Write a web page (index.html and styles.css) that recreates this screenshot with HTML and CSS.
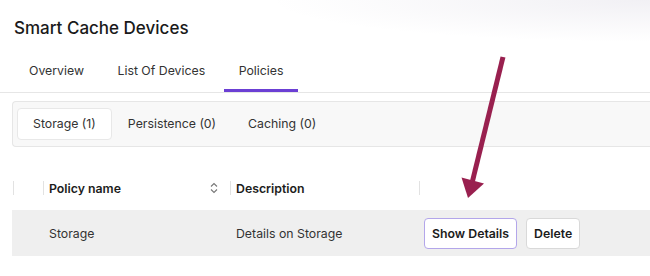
FILE: index.html
```html
<!DOCTYPE html>
<html lang="en">
<head>
    <meta charset="UTF-8">
    <meta name="viewport" content="width=device-width, initial-scale=1.0">
    <title>Smart Cache Devices</title>
    <link rel="stylesheet" href="styles.css">
</head>
<body>

<div class="page">
    <!-- Faint shadow from the panel above -->
    <div class="top-shade"></div>

    <h1 class="title">Smart Cache Devices</h1>

    <!-- Main tabs -->
    <div class="tabs">
        <div class="tab">Overview</div>
        <div class="tab">List Of Devices</div>
        <div class="tab active">Policies</div>
    </div>

    <!-- Policy type switcher -->
    <div class="segments">
        <div class="segment selected">Storage (1)</div>
        <div class="segment">Persistence (0)</div>
        <div class="segment">Caching (0)</div>
    </div>

    <!-- Policies table -->
    <div class="table">
        <div class="th sep"></div>
        <div class="th sep">
            <span>Policy name</span>
            <svg class="sort" width="8" height="12" viewBox="0 0 8 12">
                <path d="M1 4.5 L4 1.5 L7 4.5 M1 7.5 L4 10.5 L7 7.5" fill="none" stroke="#777" stroke-width="1.1"/>
            </svg>
        </div>
        <div class="th sep">Description</div>
        <div class="th sep"></div>

        <div class="td"></div>
        <div class="td">Storage</div>
        <div class="td">Details on Storage</div>
        <div class="td actions">
            <button class="btn focus">Show Details</button>
            <button class="btn">Delete</button>
        </div>
    </div>

    <!-- Annotation arrow -->
    <svg class="arrow" width="650" height="276" viewBox="0 0 650 276">
        <line x1="503" y1="57" x2="472.5" y2="181" stroke="#99204f" stroke-width="5"/>
        <polygon points="461.5,177.5 484,183.5 468,198" fill="#99204f"/>
    </svg>
</div>

</body>
</html>
```

FILE: styles.css
```css
* {
    box-sizing: border-box;
}

body {
    margin: 0;
    font-family: Inter, "Noto Sans", sans-serif;
    color: #222;
    background: #fff;
    overflow: hidden;
}

.page {
    position: relative;
    width: 650px;
    height: 276px;
}

.top-shade {
    position: absolute;
    top: 0;
    left: 0;
    width: 650px;
    height: 60px;
    background: radial-gradient(ellipse 380px 42px at 100% 0, rgba(120, 110, 150, 0.1), rgba(120, 110, 150, 0));
    pointer-events: none;
}

.title {
    margin: 0;
    padding: 16px 14px 0;
    font-size: 17px;
    font-weight: 500;
    line-height: 24px;
    color: #1a1a1a;
}

.tabs {
    display: flex;
    gap: 3.5px;
    margin-top: 12px;
    padding-left: 14px;
    border-bottom: 1px solid #e6e6e6;
}

.tab {
    height: 40px;
    padding: 0 15px;
    font-size: 12.3px;
    line-height: 38px;
    color: #333;
    border-bottom: 3px solid transparent;
}

.tab.active {
    border-bottom-color: #6b3fd4;
}

.segments {
    display: flex;
    margin: 8px 0 0 12px;
    padding: 6px 4px;
    height: 46px;
    background: #f8f8f8;
    border: 1px solid #e6e6e6;
    border-right: none;
    border-radius: 4px 0 0 4px;
}

.segment {
    height: 32px;
    padding: 0 15px;
    font-size: 12.3px;
    line-height: 30px;
    color: #333;
    border: 1px solid transparent;
    border-radius: 4px;
}

.segment.selected {
    background: #fff;
    border-color: #e8e8e8;
}

.table {
    display: grid;
    grid-template-columns: 30px 187px 189px 1fr;
    margin: 19px 0 0 12px;
}

.th {
    display: flex;
    align-items: center;
    height: 44px;
    padding: 0 11px 0 7px;
    font-size: 12.3px;
    font-weight: 600;
    color: #1c1c1c;
}

.th.sep {
    background: linear-gradient(#e2e2e2, #e2e2e2) 1px center / 1px 14px no-repeat;
}

.th span {
    flex: 1;
}

.td {
    display: flex;
    align-items: center;
    height: 46px;
    padding: 0 7px;
    background: #efefef;
    font-size: 12.3px;
    color: #333;
}

.actions {
    gap: 9px;
    padding-left: 6px;
}

.btn {
    height: 31px;
    padding: 0 7px;
    font-family: Inter, "Noto Sans", sans-serif;
    font-size: 12.3px;
    font-weight: 600;
    color: #1c1c1c;
    background: #fff;
    border: 1px solid #d9d9d9;
    border-radius: 4px;
}

.btn.focus {
    border-color: #b3a6ea;
}

.arrow {
    position: absolute;
    top: 0;
    left: 0;
    pointer-events: none;
}
```
